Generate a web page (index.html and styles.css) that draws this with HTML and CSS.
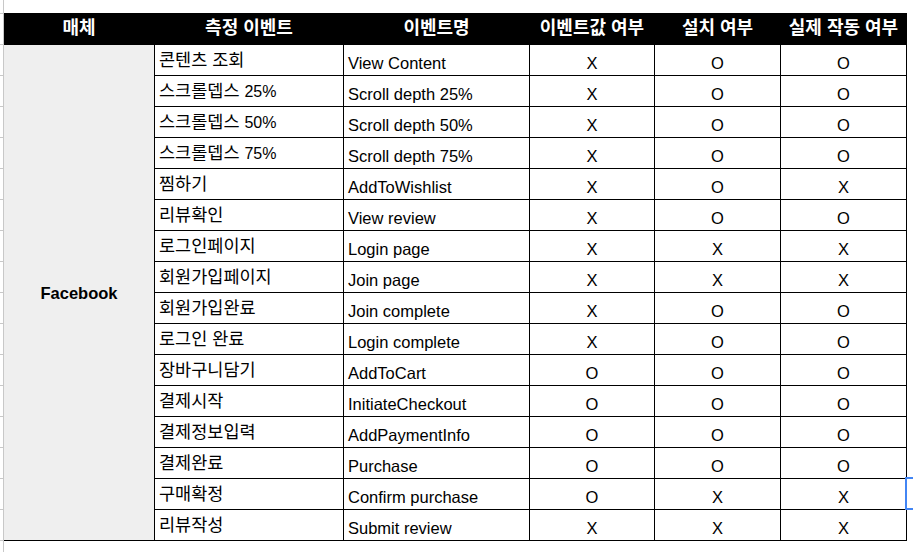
FILE: index.html
```html
<!DOCTYPE html>
<html lang="ko">
<head>
<meta charset="utf-8">
<title>Facebook 이벤트</title>
<link rel="stylesheet" href="styles.css">
</head>
<body>
<div class="sheet">
  <div class="gutter">
    <div class="g-top"></div>
    <div class="g-row"></div>
    <div class="g-row"></div><div class="g-row"></div><div class="g-row"></div><div class="g-row"></div>
    <div class="g-row"></div><div class="g-row"></div><div class="g-row"></div><div class="g-row"></div>
    <div class="g-row"></div><div class="g-row"></div><div class="g-row"></div><div class="g-row"></div>
    <div class="g-row"></div><div class="g-row"></div><div class="g-row"></div><div class="g-row"></div>
  </div>
  <div class="grid">
    <div class="h">매체</div>
    <div class="h">측정 이벤트</div>
    <div class="h">이벤트명</div>
    <div class="h">이벤트값 여부</div>
    <div class="h">설치 여부</div>
    <div class="h">실제 작동 여부</div>

    <div class="media">Facebook</div>

    <div class="c ko">콘텐츠 조회</div><div class="c">View Content</div><div class="c m">X</div><div class="c m">O</div><div class="c m">O</div>
    <div class="c ko">스크롤뎁스&nbsp;<span class="num">25%</span></div><div class="c">Scroll depth 25%</div><div class="c m">X</div><div class="c m">O</div><div class="c m">O</div>
    <div class="c ko">스크롤뎁스&nbsp;<span class="num">50%</span></div><div class="c">Scroll depth 50%</div><div class="c m">X</div><div class="c m">O</div><div class="c m">O</div>
    <div class="c ko">스크롤뎁스&nbsp;<span class="num">75%</span></div><div class="c">Scroll depth 75%</div><div class="c m">X</div><div class="c m">O</div><div class="c m">O</div>
    <div class="c ko">찜하기</div><div class="c">AddToWishlist</div><div class="c m">X</div><div class="c m">O</div><div class="c m">X</div>
    <div class="c ko">리뷰확인</div><div class="c">View review</div><div class="c m">X</div><div class="c m">O</div><div class="c m">O</div>
    <div class="c ko">로그인페이지</div><div class="c">Login page</div><div class="c m">X</div><div class="c m">X</div><div class="c m">X</div>
    <div class="c ko">회원가입페이지</div><div class="c">Join page</div><div class="c m">X</div><div class="c m">X</div><div class="c m">X</div>
    <div class="c ko">회원가입완료</div><div class="c">Join complete</div><div class="c m">X</div><div class="c m">O</div><div class="c m">O</div>
    <div class="c ko">로그인 완료</div><div class="c">Login complete</div><div class="c m">X</div><div class="c m">O</div><div class="c m">O</div>
    <div class="c ko">장바구니담기</div><div class="c">AddToCart</div><div class="c m">O</div><div class="c m">O</div><div class="c m">O</div>
    <div class="c ko">결제시작</div><div class="c">InitiateCheckout</div><div class="c m">O</div><div class="c m">O</div><div class="c m">O</div>
    <div class="c ko">결제정보입력</div><div class="c">AddPaymentInfo</div><div class="c m">O</div><div class="c m">O</div><div class="c m">O</div>
    <div class="c ko">결제완료</div><div class="c">Purchase</div><div class="c m">O</div><div class="c m">O</div><div class="c m">O</div>
    <div class="c ko">구매확정</div><div class="c">Confirm purchase</div><div class="c m">O</div><div class="c m">X</div><div class="c m">X</div>
    <div class="c ko">리뷰작성</div><div class="c">Submit review</div><div class="c m">X</div><div class="c m">X</div><div class="c m">X</div>
  </div>
  <div class="selection"></div>
</div>
</body>
</html>
```

FILE: styles.css
```css
html, body {
  margin: 0;
  padding: 0;
  background: #fff;
}

body {
  font-family: "Liberation Sans", "Noto Sans CJK KR", sans-serif;
  font-size: 16.5px;
  color: #000;
}

.sheet {
  position: relative;
  display: flex;
  align-items: flex-start;
  width: 913px;
  height: 552px;
  overflow: hidden;
}

.gutter {
  width: 3px;
  border-right: 1px solid #c8c8c8;
  height: 552px;
  display: flex;
  flex-direction: column;
}

.g-top {
  height: 13px;
  border-bottom: 1px solid #c8c8c8;
}

.g-row {
  height: 30px;
  border-bottom: 1px solid #c8c8c8;
}

.grid {
  margin-top: 13px;
  display: grid;
  grid-template-columns: 150px 188px 185px 124px 125px 125px;
  grid-template-rows: 31px repeat(16, 30px);
  gap: 1px;
  background: #000;
  border-right: 1px solid #000;
  border-bottom: 1px solid #000;
}

.h {
  background: #000;
  color: #fff;
  font-weight: 700;
  font-size: 18px;
  display: flex;
  align-items: center;
  justify-content: center;
  line-height: 19px;
  padding-bottom: 1px;
  white-space: nowrap;
}

.media {
  grid-column: 1;
  grid-row: 2 / span 16;
  background: #efefef;
  font-weight: 700;
  display: flex;
  align-items: center;
  justify-content: center;
  padding-top: 1px;
}

.c {
  background: #fff;
  display: flex;
  align-items: flex-end;
  padding: 0 4px 2px;
  line-height: 19px;
  white-space: nowrap;
}

.c.ko {
  display: block;
  padding-top: 6px;
  padding-left: 4px;
  padding-bottom: 5px;
  font-size: 17.5px;
}

.num {
  font-size: 16px;
}

.c.m {
  justify-content: center;
  padding-left: 0;
  padding-right: 0;
}

.selection {
  position: absolute;
  left: 905px;
  top: 477px;
  width: 20px;
  height: 29px;
  border: 2px solid #4285f4;
  border-right: none;
}
```
